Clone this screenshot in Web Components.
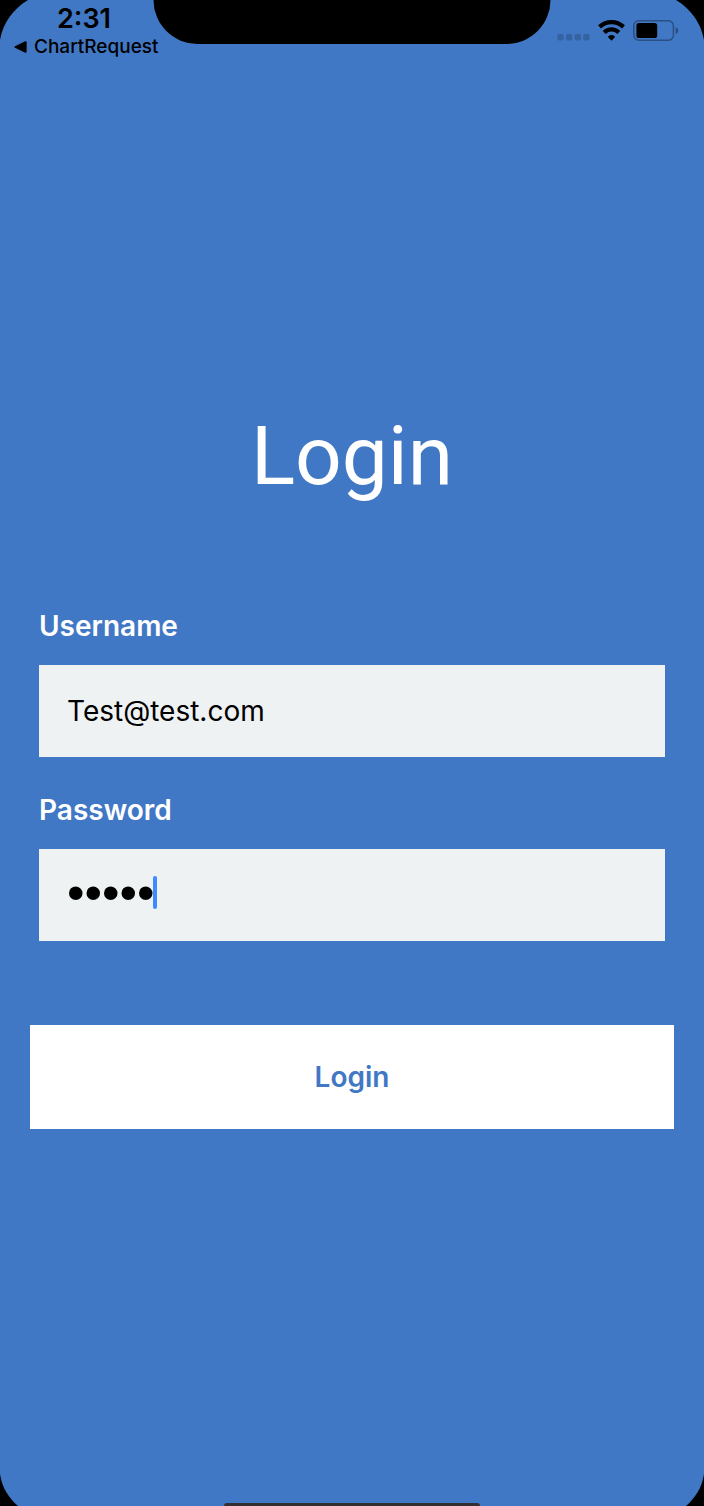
<!DOCTYPE html>
<html lang="en">
<head>
<meta charset="utf-8">
<meta name="viewport" content="width=device-width, initial-scale=1">
<title>Login</title>
<style>
  html { background: #000; }
  body { margin: 0; font-family: Inter, "Liberation Sans", sans-serif; }
</style>
</head>
<body>
<phone-screen>
  <status-bar slot="status" time="2:31" back="ChartRequest"></status-bar>
  <login-form></login-form>
</phone-screen>
<script>
const define = (name, html, setup) => {
  const template = document.createElement("template");
  template.innerHTML = html;
  customElements.define(name, class extends HTMLElement {
    constructor() {
      super();
      this.attachShadow({ mode: "open" }).append(template.content.cloneNode(true));
    }
    connectedCallback() { if (setup) setup(this, this.shadowRoot); }
  });
};

define("phone-screen", `
  <style>
    :host { display: flex; flex-direction: column; position: relative; min-height: 100vh; overflow: hidden; background: #4178c5; }
    main { flex: 1; }
    .corner { position: absolute; width: 28px; height: 40px; fill: #000; }
    .tl { top: 0; left: 0; }
    .tr { top: 0; right: 0; transform: scaleX(-1); }
    .bl { bottom: 0; left: 0; width: 18px; height: 32px; }
    .br { bottom: 0; right: 0; width: 18px; height: 32px; transform: scaleX(-1); }
    .notch { position: absolute; top: 0; left: 50%; width: 397px; height: 44px; transform: translateX(-50%); background: #000; border-radius: 0 0 46px 46px; }
    .home { align-self: center; width: 256px; height: 3px; background: #332f30; border-radius: 3px 3px 0 0; }
  </style>
  <slot name="status"></slot>
  <main><slot></slot></main>
  <div class="home"></div>
  <div class="notch"></div>
  <svg class="corner tl" viewBox="0 0 28 40" aria-hidden="true"><path d="M0 0H28C13 9 3 23 0 40Z"/></svg>
  <svg class="corner tr" viewBox="0 0 28 40" aria-hidden="true"><path d="M0 0H28C13 9 3 23 0 40Z"/></svg>
  <svg class="corner bl" viewBox="0 0 18 32" aria-hidden="true"><path d="M0 32H18C9 24 2 14 0 0Z"/></svg>
  <svg class="corner br" viewBox="0 0 18 32" aria-hidden="true"><path d="M0 32H18C9 24 2 14 0 0Z"/></svg>
`);

define("status-bar", `
  <style>
    :host { display: flex; justify-content: space-between; height: 60px; padding: 5px 25px 0 14px; box-sizing: border-box; color: #000; }
    .left { display: flex; flex-direction: column; }
    .time { font-size: 27px; line-height: 28px; font-weight: 600; padding-left: 43px; }
    a { display: flex; align-items: center; gap: 7px; color: inherit; text-decoration: none; font-size: 19px; line-height: 28px; font-weight: 500; }
    .icons { display: flex; align-items: flex-start; padding-top: 15px; gap: 8px; }
    .signal { margin-top: 14px; }
    svg { display: block; }
  </style>
  <div class="left">
    <span class="time"></span>
    <a href="#"><svg width="13" height="12" viewBox="0 0 13 12" aria-hidden="true"><path d="M1 5.2 11.2.3Q12.6 0 12.6 1.2V10.8Q12.6 12 11.2 11.7L1 6.8Q-.4 6 1 5.2Z"/></svg><span class="back"></span></a>
  </div>
  <div class="icons">
    <svg class="signal" width="33" height="7" viewBox="0 0 33 7" fill="#3562a0" aria-hidden="true"><rect x="0.3" width="6.3" height="6.5" rx="1.8"/><rect x="9" width="6.3" height="6.5" rx="1.8"/><rect x="17.7" width="6.3" height="6.5" rx="1.8"/><rect x="26.2" width="6.3" height="6.5" rx="1.8"/></svg>
    <svg width="27" height="21" viewBox="0 0 27 21" aria-hidden="true">
      <g fill="none" stroke="#000" stroke-width="4.2"><path d="M1.5 6.9C8.4.5 18.6.5 25.5 6.9"/><path d="M6.2 12.4C10.4 8.3 16.6 8.3 20.8 12.4"/></g>
      <path d="M10.1 16.4Q13.5 13.6 16.9 16.4Q17.2 16.8 16.8 17.2L14 20.2Q13.5 20.7 13 20.2L10.2 17.2Q9.8 16.8 10.1 16.4Z"/>
    </svg>
    <svg width="46" height="21" viewBox="0 0 46 21" aria-hidden="true">
      <rect x=".8" y=".8" width="39.6" height="19.4" rx="5" fill="none" stroke="#2b4f82" stroke-width="1.5"/>
      <rect x="3.4" y="3" width="20.8" height="15" rx="2.6"/>
      <path d="M42.6 7Q45.4 8.2 45.4 10.5T42.6 14Z" fill="#2b4f82"/>
    </svg>
  </div>
`, (host, root) => {
  root.querySelector(".time").textContent = host.getAttribute("time");
  root.querySelector(".back").textContent = host.getAttribute("back");
});

define("text-field", `
  <style>
    :host { display: block; }
    label { display: block; color: #fff; font-size: 28px; line-height: 36px; font-weight: 600; margin-bottom: 21px; }
    .box { position: relative; }
    input { display: block; width: 100%; height: 92px; box-sizing: border-box; padding: 0 28px; border: 0; border-radius: 0; outline: 0; background: #eef2f3; color: #000; font: 400 28px Inter, "Liberation Sans", sans-serif; }
    input[type=password] { padding-bottom: 4px; font: 50px "Liberation Sans", sans-serif; }
    .caret { display: none; position: absolute; left: 114px; top: 27px; width: 4px; height: 33px; border-radius: 2px; background: #3e8bff; }
    :host([active]) .caret { display: block; }
  </style>
  <label for="field"></label>
  <div class="box"><input id="field"><span class="caret"></span></div>
`, (host, root) => {
  const input = root.querySelector("input");
  root.querySelector("label").textContent = host.getAttribute("label");
  input.type = host.getAttribute("type");
  input.value = host.getAttribute("value");
});

define("login-button", `
  <style>
    :host { display: block; }
    button { display: block; width: 100%; height: 104px; padding: 0; border: 0; border-radius: 0; background: #fff; color: #4178c5; font: 600 28px Inter, "Liberation Sans", sans-serif; }
  </style>
  <button type="button"><slot></slot></button>
`);

define("login-form", `
  <style>
    :host { display: block; padding: 344px 30px 40px; }
    h1 { margin: 0 0 100px; color: #fff; font-family: Roboto, "Liberation Sans", sans-serif; font-size: 82px; line-height: 104px; font-weight: 400; text-align: center; }
    .fields { display: flex; flex-direction: column; gap: 35px; padding: 0 9px; margin-bottom: 84px; }
  </style>
  <h1>Login</h1>
  <div class="fields">
    <text-field label="Username" type="text" value="Test@test.com"></text-field>
    <text-field label="Password" type="password" value="tests" active></text-field>
  </div>
  <login-button>Login</login-button>
`);
</script>
</body>
</html>
